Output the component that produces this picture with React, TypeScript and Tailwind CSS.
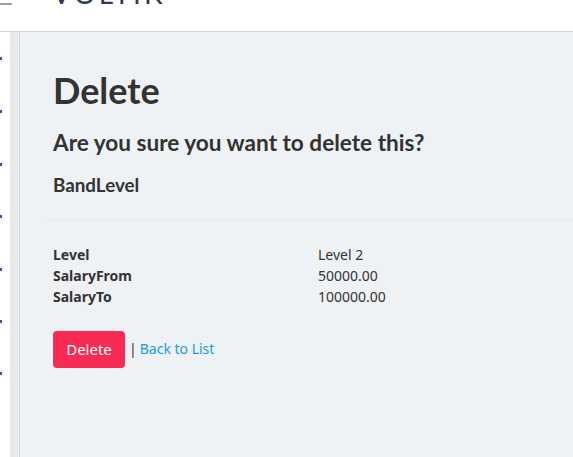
export default function App() {
  const dots = [57, 110, 163, 215, 268, 320, 372];
  const rows = [
    { label: "Level", value: "Level 2" },
    { label: "SalaryFrom", value: "50000.00" },
    { label: "SalaryTo", value: "100000.00" },
  ];

  return (
    <div className="w-[573px] h-[457px] overflow-hidden flex flex-col bg-white text-[#333]">
      {/* header, scrolled partly out of view */}
      <header className="h-[32px] shrink-0 border-b border-[#cfd3d6] overflow-hidden bg-white">
        <div className="flex items-end h-[32px] -mt-[23px]">
          <div className="flex flex-col gap-[5px] w-[12px] mb-[4px]">
            <span className="block h-[2px] bg-[#9aa0a6]" />
            <span className="block h-[2px] bg-[#9aa0a6]" />
            <span className="block h-[2px] bg-[#9aa0a6]" />
          </div>
          <span className="ml-[40px] text-[28px] leading-[32px] tracking-[3px] text-[#2b3a55] font-['Lato','Liberation_Sans',sans-serif]">
            VOLTIK
          </span>
        </div>
      </header>

      <div className="flex flex-1 min-h-0">
        {/* collapsed sidebar */}
        <div className="relative w-[10px] bg-white">
          {dots.map((y) => (
            <span
              key={y}
              className="absolute left-0 w-[2px] h-[3px] bg-[#2f57a8]"
              style={{ top: y - 32 }}
            />
          ))}
        </div>
        <div className="w-[8px] bg-[#e8e8e8]" />
        <div className="w-[1px] bg-[#f4f4f4]" />
        <div className="w-[1px] bg-[#d3d3d3]" />

        <main className="flex-1 bg-[#eef2f5] pl-[33px] pr-6 pt-[38px] font-['Lato','Liberation_Sans',sans-serif]">
          <h1 className="text-[36px] leading-[40px] font-bold">Delete</h1>
          <h3 className="mt-[18px] text-[22.6px] leading-[30px] font-bold">
            Are you sure you want to delete this?
          </h3>
          <h4 className="mt-[15px] text-[18.8px] leading-[24px] font-bold">BandLevel</h4>
          <hr className="mt-[23px] -ml-[10px] -mr-6 border-[#e9e9e8]" />

          <dl className="mt-[23px] grid grid-cols-[265px_1fr] text-[14px] leading-[21px] font-['Noto_Sans','Open_Sans',sans-serif]">
            {rows.map((r) => (
              <div key={r.label} className="contents">
                <dt className="font-bold">{r.label}</dt>
                <dd>{r.value}</dd>
              </div>
            ))}
          </dl>

          <div className="mt-[24px] flex items-center font-['Noto_Sans','Open_Sans',sans-serif] text-[15px]">
            <button className="h-[37px] w-[72px] rounded-[4px] bg-[#f72b54] text-white">
              Delete
            </button>
            <span className="ml-[4px] -mt-[3px] text-[14px]">|</span>
            <a href="#" className="ml-[3px] -mt-[3px] text-[14px] text-[#1e9ae0]">
              Back to List
            </a>
          </div>
        </main>
      </div>
    </div>
  );
}
